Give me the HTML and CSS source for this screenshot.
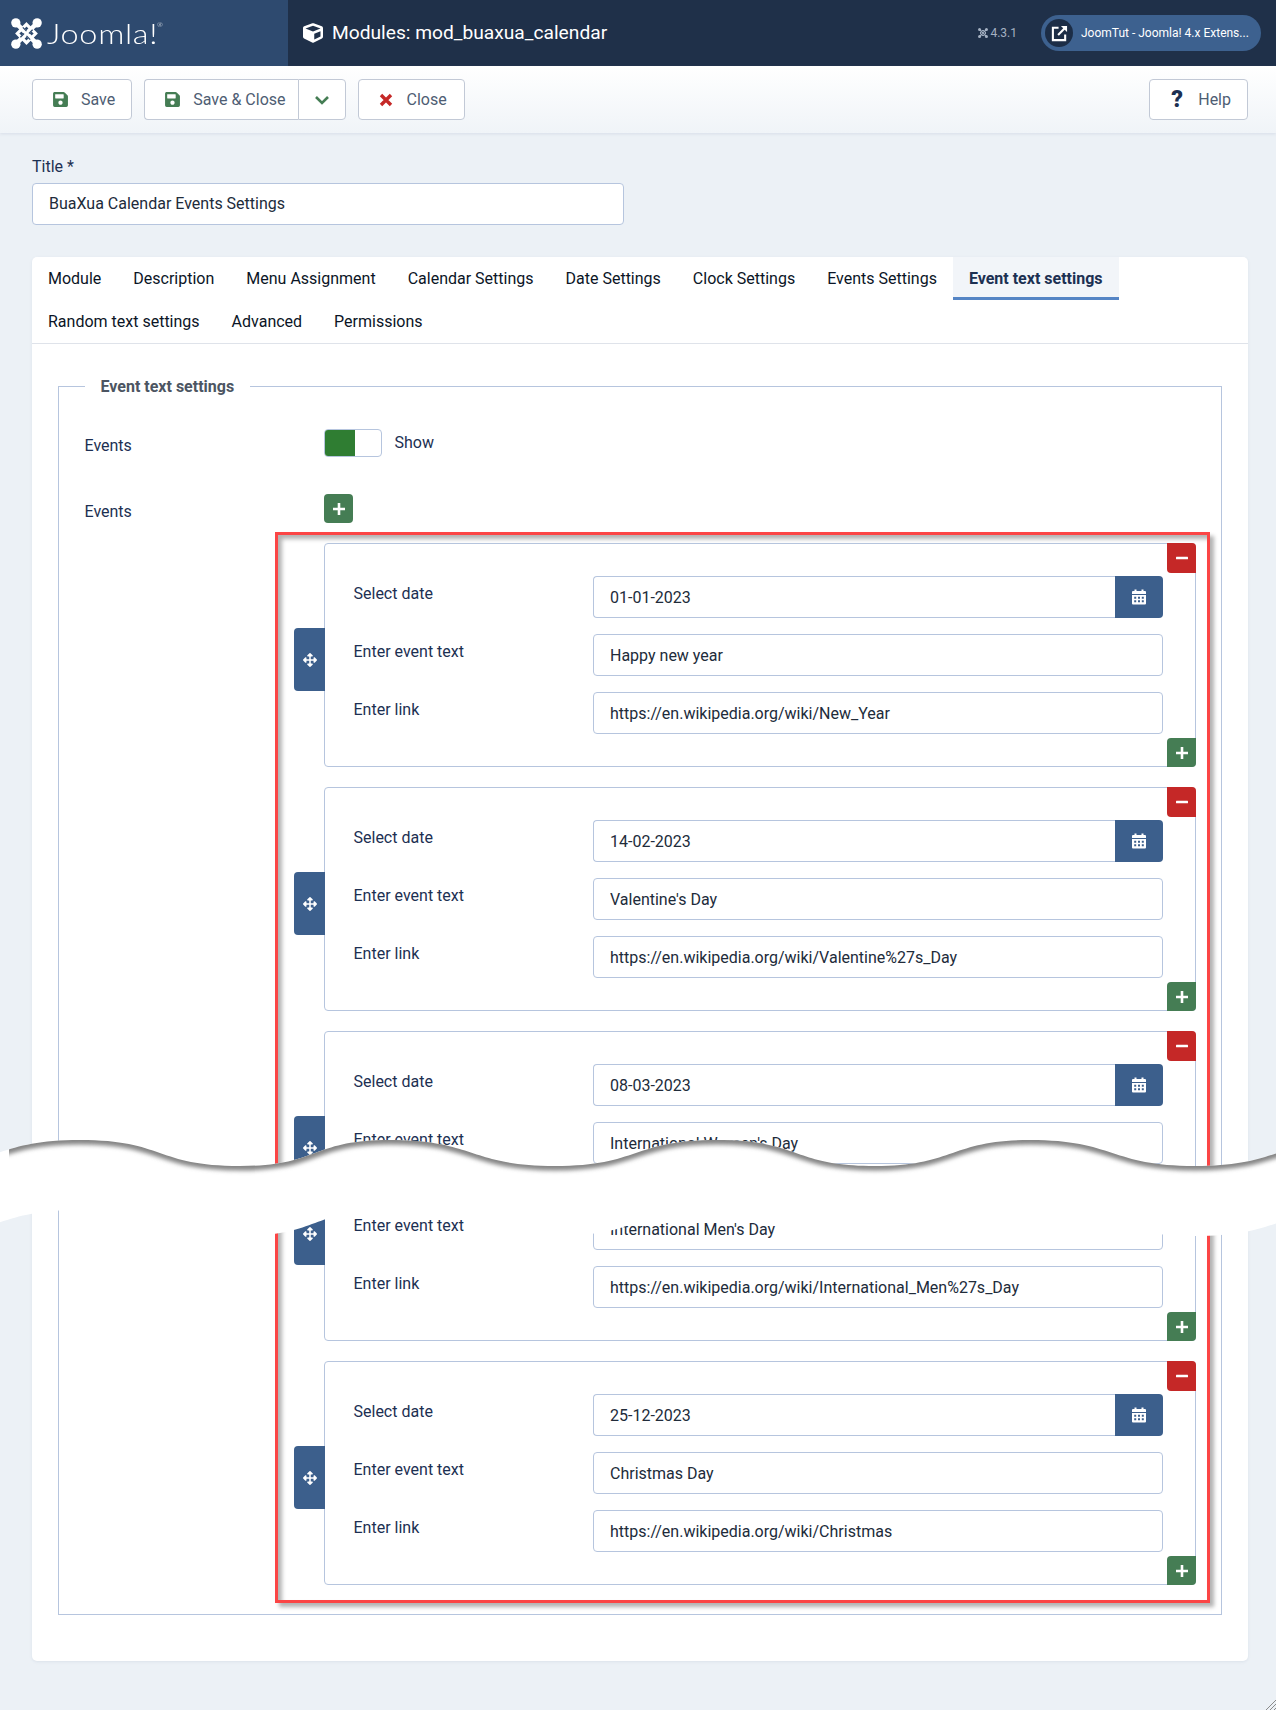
FILE: index.html
```html
<!DOCTYPE html>
<html lang="en">
<head>
<meta charset="utf-8">
<title>Modules: mod_buaxua_calendar</title>
<link rel="stylesheet" href="styles.css">
</head>
<body>
<svg class="sprite" aria-hidden="true">
  <symbol id="i-save" viewBox="0 0 448 512"><path d="M433.941 129.941l-83.882-83.882A48 48 0 0 0 316.118 32H48C21.49 32 0 53.49 0 80v352c0 26.51 21.49 48 48 48h352c26.51 0 48-21.49 48-48V163.882a48 48 0 0 0-14.059-33.941zM224 416c-35.346 0-64-28.654-64-64 0-35.346 28.654-64 64-64s64 28.654 64 64c0 35.346-28.654 64-64 64zm96-304.52V212c0 6.627-5.373 12-12 12H76c-6.627 0-12-5.373-12-12V108c0-6.627 5.373-12 12-12h228.52c3.183 0 6.235 1.264 8.485 3.515l3.48 3.48A11.996 11.996 0 0 1 320 111.48z"/></symbol>
  <symbol id="i-cube" viewBox="0 0 512 512"><path d="M239.1 6.3l-208 78c-18.7 7-31.1 25-31.1 45v225.1c0 18.2 10.3 34.8 26.5 42.9l208 104c13.5 6.8 29.4 6.8 42.9 0l208-104c16.3-8.1 26.5-24.8 26.5-42.9V129.3c0-20-12.4-37.9-31.1-44.9l-208-78C262 2.2 250 2.2 239.1 6.3zM256 68.4l192 72v1.1l-192 78-192-78v-1.1l192-72zm32 356V275.5l160-65v133.9l-160 80z"/></symbol>
  <symbol id="i-move" viewBox="0 0 512 512"><path d="M352.201 425.775l-79.196 79.196c-9.373 9.373-24.568 9.373-33.941 0l-79.196-79.196c-15.119-15.119-4.411-40.971 16.971-40.971h51.162L228 284H127.196v51.162c0 21.382-25.851 32.09-40.971 16.971L7.029 272.937c-9.373-9.373-9.373-24.569 0-33.941L86.225 159.8c15.119-15.119 40.971-4.411 40.971 16.971V228H228V127.196h-51.23c-21.382 0-32.09-25.851-16.971-40.971l79.196-79.196c9.373-9.373 24.568-9.373 33.941 0l79.196 79.196c15.119 15.119 4.411 40.971-16.971 40.971h-51.162V228h100.804v-51.162c0-21.382 25.851-32.09 40.971-16.971l79.196 79.196c9.373 9.373 9.373 24.569 0 33.941L425.773 352.2c-15.119 15.119-40.971 4.411-40.971-16.971V284H284v100.804h51.23c21.382 0 32.09 25.851 16.971 40.971z"/></symbol>
  <symbol id="i-cal" viewBox="0 0 16 16"><path fill-rule="evenodd" d="M3.500 0.500h2v1.500h5V0.500h2v1.500h1.500a1 1 0 0 1 1 1v2H1V3a1 1 0 0 1 1-1h1.500zM1 6h14v8.500a1 1 0 0 1-1 1H2a1 1 0 0 1-1-1zM3.200 7.800v1.900h2v-1.900zM7 7.800v1.900h2v-1.900zM10.800 7.800v1.900h2v-1.900zM3.200 11.300v1.900h2v-1.900zM7 11.300v1.900h2v-1.900zM10.800 11.300v1.900h2v-1.900z"/></symbol>
  <symbol id="i-plus" viewBox="0 0 12 12"><path d="M4.700 0h2.600v4.700H12v2.600H7.300V12H4.700V7.300H0V4.700h4.700z"/></symbol>
  <symbol id="i-minus" viewBox="0 0 12 12"><rect y="4.700" width="12" height="2.600" rx="0.500"/></symbol>
  <symbol id="i-mark" viewBox="0 0 32 32">
    <path class="mark-ring" d="M16 6.500L25.500 16L16 25.500L6.500 16Z"/>
    <path class="mark-cross" d="M5 5L27 27M27 5L5 27"/>
    <path class="mark-cut" d="M12.200 9.700L16 13.500M22.300 12.200L18.500 16M19.800 22.300L16 18.500M9.700 19.800L13.500 16"/>
    <circle cx="5" cy="5" r="4.800"/><circle cx="27" cy="5" r="4.800"/><circle cx="5" cy="27" r="4.800"/><circle cx="27" cy="27" r="4.800"/>
  </symbol>
</svg>

<header class="topbar">
  <div class="brand">
    <svg class="brand-mark"><use href="#i-mark"/></svg>
    <span class="brand-name">Joomla!<sup class="brand-reg">®</sup></span>
  </div>
  <div class="topbar-main">
    <svg class="title-icon"><use href="#i-cube"/></svg>
    <h1 class="page-title">Modules: mod_buaxua_calendar</h1>
    <div class="version">
      <svg class="version-mark"><use href="#i-mark"/></svg>
      <span>4.3.1</span>
    </div>
    <div class="site-pill">
      <span class="site-pill-icon">
        <svg class="ext-icon" viewBox="0 0 18 18"><path class="ext-box" d="M8 3H2v13h13v-6"/><path class="ext-shaft" d="M7.500 10.500L15 3"/><path class="ext-head" d="M10.500 1h6.500v6.500z"/></svg>
      </span>
      <span class="site-pill-text">JoomTut - Joomla! 4.x Extens...</span>
    </div>
  </div>
</header>

<nav class="toolbar">
  <button class="btn btn-save"><svg class="btn-icon ic-green"><use href="#i-save"/></svg>Save</button>
  <div class="btn-group">
    <button class="btn btn-main"><svg class="btn-icon ic-green"><use href="#i-save"/></svg>Save &amp; Close</button>
    <button class="btn btn-caret"><svg class="caret-icon" viewBox="0 0 16 10"><path d="M2 2l6 6 6-6"/></svg></button>
  </div>
  <button class="btn btn-close"><svg class="times-icon" viewBox="0 0 14 14"><path d="M2 2l10 10M12 2L2 12"/></svg>Close</button>
  <button class="btn btn-help"><span class="help-mark">?</span>Help</button>
</nav>

<main class="content">
  <label class="title-label">Title *</label>
  <input class="field title-field" value="BuaXua Calendar Events Settings">

  <section class="card">
    <ul class="tabs">
      <li class="tab">Module</li>
      <li class="tab">Description</li>
      <li class="tab">Menu Assignment</li>
      <li class="tab">Calendar Settings</li>
      <li class="tab">Date Settings</li>
      <li class="tab">Clock Settings</li>
      <li class="tab">Events Settings</li>
      <li class="tab tab-active">Event text settings</li>
      <li class="tab">Random text settings</li>
      <li class="tab">Advanced</li>
      <li class="tab">Permissions</li>
    </ul>

    <fieldset class="panel">
      <legend class="panel-legend">Event text settings</legend>

      <div class="form-row form-row-toggle">
        <span class="row-label">Events</span>
        <div class="switch-wrap">
          <span class="switch"><span class="switch-on"></span></span>
          <span class="switch-text">Show</span>
        </div>
      </div>

      <div class="form-row form-row-add">
        <span class="row-label">Events</span>
        <button class="tag tag-add tag-solo"><svg class="tag-icon"><use href="#i-plus"/></svg></button>
      </div>

      <div class="subform">
        <article class="group">
          <button class="handle"><svg class="handle-icon"><use href="#i-move"/></svg></button>
          <button class="tag tag-remove"><svg class="tag-icon"><use href="#i-minus"/></svg></button>
          <div class="group-row"><label class="group-label">Select date</label>
            <div class="date-wrap"><input class="field date-field" value="01-01-2023"><button class="date-btn"><svg class="cal-icon"><use href="#i-cal"/></svg></button></div></div>
          <div class="group-row"><label class="group-label">Enter event text</label><input class="field" value="Happy new year"></div>
          <div class="group-row"><label class="group-label">Enter link</label><input class="field" value="https://en.wikipedia.org/wiki/New_Year"></div>
          <button class="tag tag-add tag-corner"><svg class="tag-icon"><use href="#i-plus"/></svg></button>
        </article>

        <article class="group">
          <button class="handle"><svg class="handle-icon"><use href="#i-move"/></svg></button>
          <button class="tag tag-remove"><svg class="tag-icon"><use href="#i-minus"/></svg></button>
          <div class="group-row"><label class="group-label">Select date</label>
            <div class="date-wrap"><input class="field date-field" value="14-02-2023"><button class="date-btn"><svg class="cal-icon"><use href="#i-cal"/></svg></button></div></div>
          <div class="group-row"><label class="group-label">Enter event text</label><input class="field" value="Valentine's Day"></div>
          <div class="group-row"><label class="group-label">Enter link</label><input class="field" value="https://en.wikipedia.org/wiki/Valentine%27s_Day"></div>
          <button class="tag tag-add tag-corner"><svg class="tag-icon"><use href="#i-plus"/></svg></button>
        </article>

        <article class="group group-cut-below">
          <button class="handle"><svg class="handle-icon"><use href="#i-move"/></svg></button>
          <button class="tag tag-remove"><svg class="tag-icon"><use href="#i-minus"/></svg></button>
          <div class="group-row"><label class="group-label">Select date</label>
            <div class="date-wrap"><input class="field date-field" value="08-03-2023"><button class="date-btn"><svg class="cal-icon"><use href="#i-cal"/></svg></button></div></div>
          <div class="group-row"><label class="group-label">Enter event text</label><input class="field" value="International Women's Day"></div>
          <div class="group-row"><label class="group-label">Enter link</label><input class="field" value="https://en.wikipedia.org/wiki/International_Women%27s_Day"></div>
          <button class="tag tag-add tag-corner"><svg class="tag-icon"><use href="#i-plus"/></svg></button>
        </article>

        <article class="group group-cut-above">
          <button class="handle"><svg class="handle-icon"><use href="#i-move"/></svg></button>
          <button class="tag tag-remove"><svg class="tag-icon"><use href="#i-minus"/></svg></button>
          <div class="group-row"><label class="group-label">Select date</label>
            <div class="date-wrap"><input class="field date-field" value="19-11-2023"><button class="date-btn"><svg class="cal-icon"><use href="#i-cal"/></svg></button></div></div>
          <div class="group-row"><label class="group-label">Enter event text</label><input class="field" value="International Men's Day"></div>
          <div class="group-row"><label class="group-label">Enter link</label><input class="field" value="https://en.wikipedia.org/wiki/International_Men%27s_Day"></div>
          <button class="tag tag-add tag-corner"><svg class="tag-icon"><use href="#i-plus"/></svg></button>
        </article>

        <article class="group">
          <button class="handle"><svg class="handle-icon"><use href="#i-move"/></svg></button>
          <button class="tag tag-remove"><svg class="tag-icon"><use href="#i-minus"/></svg></button>
          <div class="group-row"><label class="group-label">Select date</label>
            <div class="date-wrap"><input class="field date-field" value="25-12-2023"><button class="date-btn"><svg class="cal-icon"><use href="#i-cal"/></svg></button></div></div>
          <div class="group-row"><label class="group-label">Enter event text</label><input class="field" value="Christmas Day"></div>
          <div class="group-row"><label class="group-label">Enter link</label><input class="field" value="https://en.wikipedia.org/wiki/Christmas"></div>
          <button class="tag tag-add tag-corner"><svg class="tag-icon"><use href="#i-plus"/></svg></button>
        </article>

        <div class="highlight"></div>
      </div>
    </fieldset>
  </section>
</main>

<svg class="tear" viewBox="0 0 1276 120" aria-hidden="true">
  <defs>
    <clipPath id="tear-band"><path d="M-85 36C0 36 -5 10 80 10C165 10 155 36 240 36C320 36 310 10 390 10C475 10 470 36 555 36C640 36 632 10 717 10C800 10 792 36 875 36C955 36 950 10 1030 10C1115 10 1110 36 1195 36C1280 36 1275 10 1360 10V120H-85Z"/></clipPath>
    <clipPath id="tear-start"><rect x="9" y="0" width="1300" height="120"/></clipPath>
    <filter id="tear-blur" x="-5%" y="-50%" width="110%" height="200%"><feGaussianBlur stdDeviation="2.200"/></filter>
  </defs>
  <path class="tear-paper" d="M-85 36C0 36 -5 10 80 10C165 10 155 36 240 36C320 36 310 10 390 10C475 10 470 36 555 36C640 36 632 10 717 10C800 10 792 36 875 36C955 36 950 10 1030 10C1115 10 1110 36 1195 36C1280 36 1275 10 1360 10V80C1275 80 1280 106 1195 106C1110 106 1115 80 1030 80C950 80 955 106 875 106C792 106 800 80 717 80C632 80 640 106 555 106C470 106 475 80 390 80C310 80 320 106 240 106C155 106 165 80 80 80C-5 80 0 106 -85 106Z"/>
  <g clip-path="url(#tear-band)"><g clip-path="url(#tear-start)">
    <path class="tear-shade" filter="url(#tear-blur)" d="M-85 36C0 36 -5 10 80 10C165 10 155 36 240 36C320 36 310 10 390 10C475 10 470 36 555 36C640 36 632 10 717 10C800 10 792 36 875 36C955 36 950 10 1030 10C1115 10 1110 36 1195 36C1280 36 1275 10 1360 10"/>
  </g></g>
</svg>

<svg class="grip" viewBox="0 0 10 10" aria-hidden="true"><path d="M0 10L10 0M4 10L10 4M8 10L10 8"/></svg>
</body>
</html>
```

FILE: styles.css
```css
* { box-sizing: border-box; }
html, body { margin: 0; padding: 0; }
body {
  position: relative;
  width: 1276px;
  height: 1710px;
  overflow: hidden;
  background: #ecf1f6;
  color: #1c3052;
  font: 16px/24px Roboto, "Liberation Sans", sans-serif;
  --mark-gap: #2e4a6f;
}
.sprite { display: none; }
.mark-ring { fill: none; stroke: currentColor; stroke-width: 3.2; }
.mark-cross { fill: none; stroke: currentColor; stroke-width: 4.6; }
.mark-cut { fill: none; stroke: var(--mark-gap); stroke-width: 1.3; }

/* top bar */
.topbar { display: flex; height: 66px; background: #1f3049; color: #fff; }
.brand {
  display: flex;
  align-items: center;
  width: 288px;
  padding-left: 11px;
  background: #2e4a6f;
  color: #fff;
  fill: #fff;
}
.brand-mark { width: 31px; height: 31px; margin-right: 5px; }
.brand-name {
  position: relative;
  font: 300 28px/30px Lato, "Open Sans", sans-serif;
  letter-spacing: 0.6px;
  transform: scaleX(1.16);
  transform-origin: left center;
}
.brand-reg { position: absolute; top: 3px; right: -4px; font-size: 6px; line-height: 8px; letter-spacing: 0; }
.topbar-main { flex: 1; display: flex; align-items: center; padding-left: 15px; }
.title-icon { width: 20px; height: 20px; margin: 0 9px 0 0; fill: #fff; flex: none; }
.page-title { flex: 1; margin: 0; font: 400 19.2px/24px Roboto, sans-serif; color: #fff; }
.version {
  display: flex;
  align-items: center;
  gap: 2px;
  margin-right: 24px;
  font-size: 12px;
  color: #a5b1c2;
  fill: #a5b1c2;
  --mark-gap: #1f3049;
}
.version-mark { width: 10px; height: 10px; color: #a5b1c2; }
.site-pill {
  display: flex;
  align-items: center;
  width: 220px;
  height: 36px;
  margin-right: 15px;
  padding-left: 4px;
  border-radius: 18px;
  background: #3d618f;
}
.site-pill-icon {
  display: flex;
  align-items: center;
  justify-content: center;
  width: 28px;
  height: 28px;
  border-radius: 50%;
  background: #1c2d46;
}
.ext-icon { width: 17px; height: 17px; }
.ext-box, .ext-shaft { fill: none; stroke: #fff; stroke-width: 2.2; }
.ext-head { fill: #fff; }
.site-pill-text { margin-left: 8px; font-size: 12px; color: #fff; white-space: nowrap; }

/* toolbar */
.toolbar {
  display: flex;
  align-items: flex-start;
  gap: 12px;
  height: 67px;
  padding: 13px 28px 0 32px;
  background: linear-gradient(#fff, #f0f4f8);
  box-shadow: 0 1px 3px rgba(120, 140, 170, .18);
}
.btn {
  display: flex;
  align-items: center;
  height: 41px;
  padding: 0 15px 0 20px;
  border: 1px solid #c2c9d6;
  border-radius: 4px;
  background: #fff;
  color: #4e5d73;
  font: 16px/24px Roboto, sans-serif;
}
.btn-save { padding-right: 16px; }
.btn-icon { width: 15px; height: 17px; margin-right: 13px; flex: none; }
.ic-green { fill: #457d54; }
.btn-group { display: flex; }
.btn-main { border-radius: 4px 0 0 4px; border-right: 0; padding-right: 12px; }
.btn-caret { width: 48px; padding: 0 0 0 15px; border-radius: 0 4px 4px 0; }
.caret-icon { width: 16px; height: 10px; fill: none; stroke: #457d54; stroke-width: 2.6; }
.btn-close { padding-right: 17px; padding-left: 20px; }
.times-icon { width: 14px; height: 14px; margin-right: 14px; fill: none; stroke: #c52827; stroke-width: 3.4; }
.btn-help { margin-left: auto; padding-left: 20px; padding-right: 16px; }
.help-mark { width: 14px; margin-right: 14px; font-size: 23px; font-weight: 900; color: #1c3052; text-align: center; }

/* form */
.content { padding: 22px 28px 0 32px; }
.title-label { display: block; margin-bottom: 4px; }
.field {
  display: block;
  width: 100%;
  height: 42px;
  padding: 0 16px;
  border: 1px solid #b6c5de;
  border-radius: 4px;
  background: #fff;
  color: #212b3a;
  font: 16px/24px Roboto, sans-serif;
}
.title-field { width: 592px; padding-bottom: 2px; }
.card {
  margin-top: 32px;
  width: 1216px;
  height: 1404px;
  border-radius: 5px;
  background: #fff;
  box-shadow: 0 1px 3px rgba(120, 140, 170, .14);
  padding-bottom: 46px;
}

/* tabs */
.tabs {
  display: flex;
  flex-wrap: wrap;
  margin: 0;
  padding: 0;
  list-style: none;
  border-bottom: 1px solid #dfe3ea;
}
.tab { height: 43px; padding: 10px 16px 0; color: #0b1526; white-space: nowrap; }
.tab-active {
  padding-bottom: 0;
  border-bottom: 3px solid #5585c5;
  background: #f2f5f9;
  color: #1c3052;
  font-weight: 700;
}

/* fieldset */
.panel {
  min-width: 0;
  margin: 29px 26px 0;
  padding: 0 25px 29px 25.500px;
  border: 1px solid #b6c5de;
}
.panel-legend {
  padding: 2px 16px 0;
  color: #4c5562;
  font-weight: 700;
}
.form-row { display: flex; }
.row-label { width: 239.500px; flex: none; }
.form-row-toggle { margin-top: 30px; height: 28px; }
.form-row-toggle .row-label { padding-top: 5px; }
.switch-wrap { display: flex; align-items: flex-start; }
.switch {
  display: block;
  width: 58px;
  height: 28px;
  border: 1px solid #b6c5de;
  border-radius: 4px;
  background: #fff;
  overflow: hidden;
}
.switch-on { display: block; width: 30px; height: 100%; background: #2f7d32; }
.switch-text { margin-left: 12.500px; line-height: 28px; }
.form-row-add { margin-top: 37px; height: 29px; }
.form-row-add .row-label { padding-top: 6px; }

/* tags */
.tag {
  display: flex;
  align-items: center;
  justify-content: center;
  width: 29px;
  padding: 0;
  border: 0;
  color: #fff;
  fill: #fff;
}
.tag-icon { width: 12px; height: 12px; }
.tag-add { height: 29px; background: #457d54; }
.tag-solo { border-radius: 4px; }
.tag-remove {
  position: absolute;
  top: -1px;
  right: -1px;
  height: 30px;
  background: #c52827;
  border-radius: 0 4px 0 4px;
}
.tag-corner {
  position: absolute;
  right: -1px;
  bottom: -1px;
  border-radius: 4px 0 4px 0;
}

/* repeatable groups */
.subform { position: relative; margin: 20px 0 0 239.500px; }
.group {
  position: relative;
  display: flex;
  flex-direction: column;
  gap: 16px;
  height: 224px;
  padding: 32px 32px 32px 28.500px;
  margin-bottom: 20px;
  border: 1px solid #b6c5de;
  border-radius: 4px;
  background: #fff;
}
.group:last-of-type { margin-bottom: 0; }
.group-cut-below { margin-bottom: -138px; clip-path: inset(0 -40px 75px -40px); }
.group-cut-above { clip-path: inset(63px -40px 0 -40px); }
.group-row { display: flex; }
.group-label { width: 239.500px; flex: none; padding-top: 6px; }
.handle {
  position: absolute;
  top: 84px;
  left: -31px;
  display: flex;
  align-items: center;
  justify-content: center;
  width: 31px;
  height: 63px;
  padding: 0;
  border: 0;
  border-radius: 4px 0 0 4px;
  background: #3c5f8c;
  fill: #fff;
}
.handle-icon { width: 14px; height: 14px; }
.date-wrap { display: flex; flex: 1; }
.date-field { flex: 1; border-radius: 4px 0 0 4px; border-right: 0; }
.date-btn {
  display: flex;
  align-items: center;
  justify-content: center;
  width: 48px;
  height: 42px;
  padding: 0;
  border: 0;
  border-radius: 0 4px 4px 0;
  background: #3c5f8c;
  fill: #fff;
}
.cal-icon { width: 16px; height: 16px; }

/* red annotation frame */
.highlight {
  position: absolute;
  top: -11px;
  right: -14px;
  bottom: -18px;
  left: -49px;
  border: 3px solid #fb4545;
  box-shadow: 4px 4px 4px rgba(0, 0, 0, .3), inset 4px 4px 4px rgba(0, 0, 0, .3);
  pointer-events: none;
}

/* torn paper overlay */
.tear { position: absolute; top: 1130px; left: 0; width: 1276px; height: 120px; }
.tear-paper { fill: #fff; }
.tear-shade { fill: none; stroke: #848484; stroke-width: 9; }
.grip {
  position: absolute;
  right: 0;
  bottom: 0;
  width: 10px;
  height: 10px;
  fill: none;
  stroke: #8b8b8b;
  stroke-width: 1;
}
```
